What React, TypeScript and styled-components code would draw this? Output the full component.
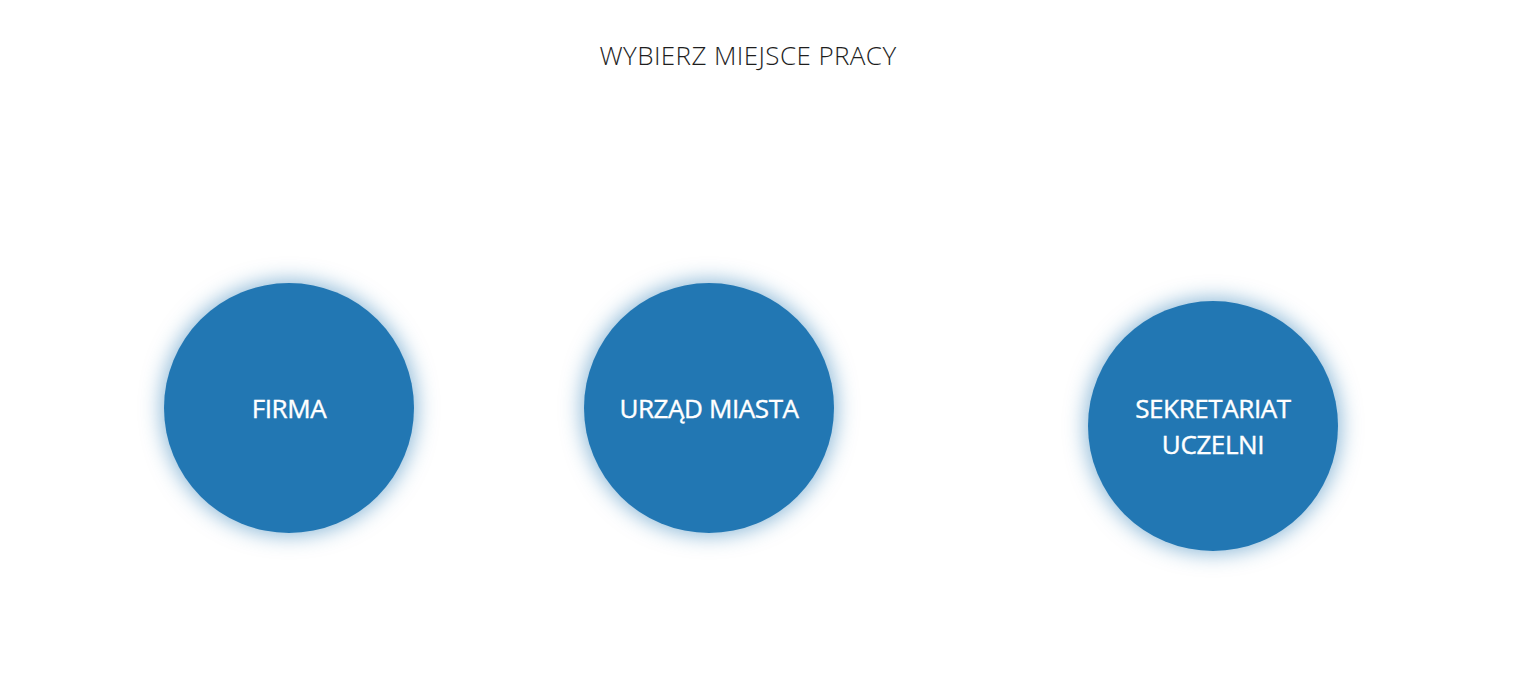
import React from 'react'
import styled, { createGlobalStyle } from 'styled-components'

const GlobalStyle = createGlobalStyle`
  html, body {
    margin: 0;
    padding: 0;
    background: #fff;
    font-family: 'Open Sans', 'Noto Sans', sans-serif;
  }
`

interface Place {
  label: string
  gapBefore: number
  drop: number
}

const places: Place[] = [
  { label: 'FIRMA', gapBefore: 164, drop: 0 },
  { label: 'URZĄD MIASTA', gapBefore: 170, drop: 0 },
  { label: 'SEKRETARIAT UCZELNI', gapBefore: 254, drop: 18 },
]

export default function App() {
  return (
    <>
      <GlobalStyle />
      <Page>
        <Title>WYBIERZ MIEJSCE PRACY</Title>
        <Row>
          {places.map((place) => (
            <Circle key={place.label} $gapBefore={place.gapBefore} $drop={place.drop}>
              <Label>{place.label}</Label>
            </Circle>
          ))}
        </Row>
      </Page>
    </>
  )
}

const Page = styled.main`
  width: 1528px;
  height: 684px;
  box-sizing: border-box;
  padding-top: 37px;
  display: flex;
  flex-direction: column;
`

const Title = styled.h1`
  margin: 0 0 0 -32px;
  text-align: center;
  font-family: 'Open Sans', sans-serif;
  font-weight: 300;
  font-size: 26px;
  letter-spacing: 0.4px;
  line-height: 36px;
  color: #1e1e1e;
`

const Row = styled.div`
  margin-top: 210px;
  display: flex;
  align-items: flex-start;
`

const Circle = styled.button<{ $gapBefore: number; $drop: number }>`
  flex: 0 0 auto;
  width: 250px;
  height: 250px;
  margin-left: ${(p) => p.$gapBefore}px;
  margin-top: ${(p) => p.$drop}px;
  border: none;
  border-radius: 50%;
  background: #2277b3;
  box-shadow: 0 0 20px 3px rgba(34, 119, 179, 0.5);
  display: flex;
  align-items: center;
  justify-content: center;
  padding: 0 30px;
  box-sizing: border-box;
  cursor: pointer;
`

const Label = styled.span`
  font-family: 'Open Sans', sans-serif;
  font-size: 26px;
  font-weight: 400;
  letter-spacing: -0.4px;
  line-height: 36px;
  color: #fff;
  text-align: center;
  -webkit-text-stroke: 0.4px #fff;
`
